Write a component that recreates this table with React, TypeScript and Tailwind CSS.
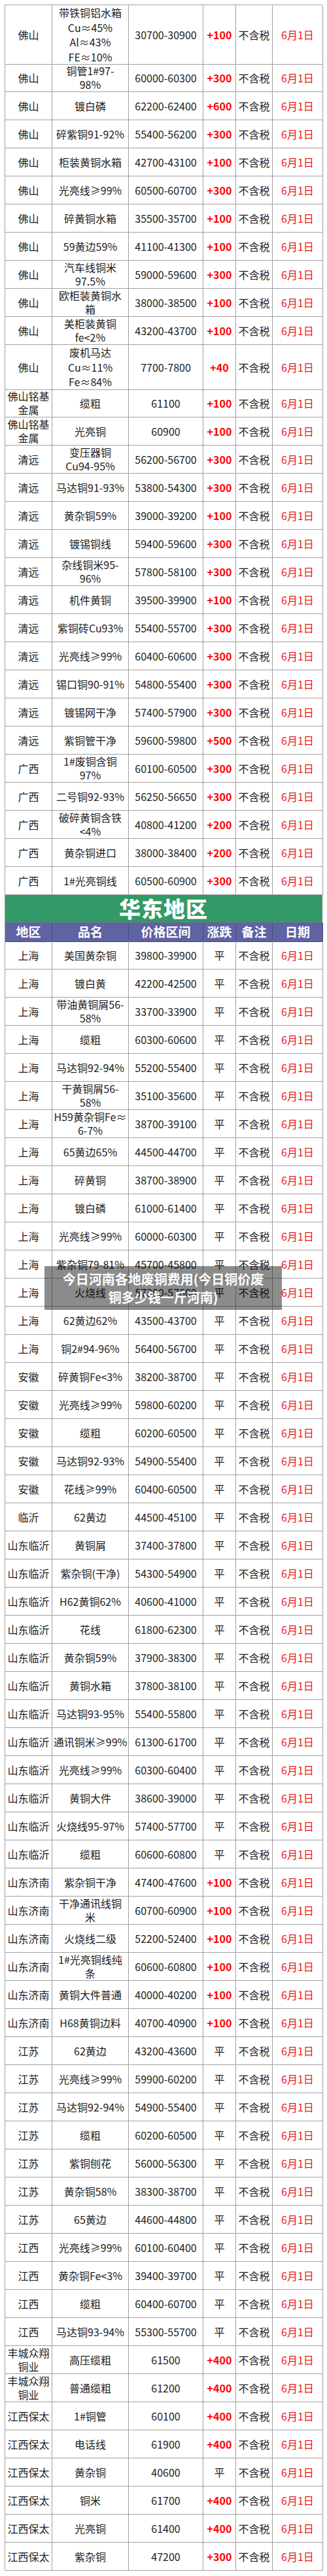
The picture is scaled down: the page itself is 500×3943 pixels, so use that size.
type Row = [string, string, string, string];

const south: Row[] = [
  ["佛山", "带铁铜铝水箱\nCu≈45%\nAl≈43%\nFE≈10%", "30700-30900", "+100"],
  ["佛山", "铜管1#97-\n98%", "60000-60300", "+300"],
  ["佛山", "镀白磷", "62200-62400", "+600"],
  ["佛山", "碎紫铜91-92%", "55400-56200", "+300"],
  ["佛山", "柜装黄铜水箱", "42700-43100", "+100"],
  ["佛山", "光亮线≥99%", "60500-60700", "+300"],
  ["佛山", "碎黄铜水箱", "35500-35700", "+100"],
  ["佛山", "59黄边59%", "41100-41300", "+100"],
  ["佛山", "汽车线铜米\n97.5%", "59000-59600", "+300"],
  ["佛山", "欧柜装黄铜水\n箱", "38000-38500", "+100"],
  ["佛山", "美柜装黄铜\nfe<2%", "43200-43700", "+100"],
  ["佛山", "废机马达\nCu≈11%\nFe≈84%", "7700-7800", "+40"],
  ["佛山铭基\n金属", "缆粗", "61100", "+100"],
  ["佛山铭基\n金属", "光亮铜", "60900", "+100"],
  ["清远", "变压器铜\nCu94-95%", "56200-56700", "+300"],
  ["清远", "马达铜91-93%", "53800-54300", "+300"],
  ["清远", "黄杂铜59%", "39000-39200", "+100"],
  ["清远", "镀锡铜线", "59400-59600", "+300"],
  ["清远", "杂线铜米95-\n96%", "57800-58100", "+300"],
  ["清远", "机件黄铜", "39500-39900", "+100"],
  ["清远", "紫铜砖Cu93%", "55400-55700", "+300"],
  ["清远", "光亮线≥99%", "60400-60600", "+300"],
  ["清远", "锡口铜90-91%", "54800-55400", "+300"],
  ["清远", "镀锡网干净", "57400-57900", "+300"],
  ["清远", "紫铜管干净", "59600-59800", "+500"],
  ["广西", "1#废铜含铜\n97%", "60100-60500", "+300"],
  ["广西", "二号铜92-93%", "56250-56650", "+300"],
  ["广西", "破碎黄铜含铁\n<4%", "40800-41200", "+200"],
  ["广西", "黄杂铜进口", "38000-38400", "+200"],
  ["广西", "1#光亮铜线", "60500-60900", "+300"],
];

const east: Row[] = [
  ["上海", "美国黄杂铜", "39800-39900", "平"],
  ["上海", "镀白黄", "42200-42500", "平"],
  ["上海", "带油黄铜屑56-\n58%", "33700-33900", "平"],
  ["上海", "缆粗", "60300-60600", "平"],
  ["上海", "马达铜92-94%", "55200-55400", "平"],
  ["上海", "干黄铜屑56-\n58%", "35100-35600", "平"],
  ["上海", "H59黄杂铜Fe≈\n6-7%", "38700-39100", "平"],
  ["上海", "65黄边65%", "44500-44700", "平"],
  ["上海", "碎黄铜", "38700-38900", "平"],
  ["上海", "镀白磷", "61000-61400", "平"],
  ["上海", "光亮线≥99%", "60000-60300", "平"],
  ["上海", "紫杂铜79-81%", "45700-45800", "平"],
  ["上海", "火烧线", "57300-57600", "平"],
  ["上海", "62黄边62%", "43500-43700", "平"],
  ["上海", "铜2#94-96%", "56400-56700", "平"],
  ["安徽", "碎黄铜Fe<3%", "38200-38700", "平"],
  ["安徽", "光亮线≥99%", "59800-60200", "平"],
  ["安徽", "缆粗", "60200-60500", "平"],
  ["安徽", "马达铜92-93%", "54900-55400", "平"],
  ["安徽", "花线≥99%", "60400-60500", "平"],
  ["临沂", "62黄边", "44500-45100", "平"],
  ["山东临沂", "黄铜屑", "37400-37800", "平"],
  ["山东临沂", "紫杂铜(干净)", "54300-54900", "平"],
  ["山东临沂", "H62黄铜62%", "40600-41000", "平"],
  ["山东临沂", "花线", "61800-62300", "平"],
  ["山东临沂", "黄杂铜59%", "37900-38300", "平"],
  ["山东临沂", "黄铜水箱", "37800-38100", "平"],
  ["山东临沂", "马达铜93-95%", "55400-55800", "平"],
  ["山东临沂", "通讯铜米≥99%", "61300-61700", "平"],
  ["山东临沂", "光亮线≥99%", "60300-60400", "平"],
  ["山东临沂", "黄铜大件", "38600-39000", "平"],
  ["山东临沂", "火烧线95-97%", "57400-57700", "平"],
  ["山东临沂", "缆粗", "60600-60800", "平"],
  ["山东济南", "紫杂铜干净", "47400-47600", "+100"],
  ["山东济南", "干净通讯线铜\n米", "60700-60900", "+100"],
  ["山东济南", "火烧线二级", "52200-52400", "+100"],
  ["山东济南", "1#光亮铜线纯\n条", "60600-60800", "+100"],
  ["山东济南", "黄铜大件普通", "40000-40200", "+100"],
  ["山东济南", "H68黄铜边料", "40700-40900", "+100"],
  ["江苏", "62黄边", "43200-43600", "平"],
  ["江苏", "光亮线≥99%", "59900-60200", "平"],
  ["江苏", "马达铜92-94%", "54900-55400", "平"],
  ["江苏", "缆粗", "60200-60500", "平"],
  ["江苏", "紫铜刨花", "56000-56300", "平"],
  ["江苏", "黄杂铜58%", "38300-38700", "平"],
  ["江苏", "65黄边", "44600-44800", "平"],
  ["江西", "光亮线≥99%", "60100-60400", "平"],
  ["江西", "黄杂铜Fe<3%", "39400-39700", "平"],
  ["江西", "缆粗", "60400-60700", "平"],
  ["江西", "马达铜93-94%", "55300-55700", "平"],
  ["丰城众翔\n铜业", "高压缆粗", "61500", "+400"],
  ["丰城众翔\n铜业", "普通缆粗", "61200", "+400"],
  ["江西保太", "1#铜管", "60100", "+400"],
  ["江西保太", "电话线", "61900", "+400"],
  ["江西保太", "黄杂铜", "40600", "平"],
  ["江西保太", "铜米", "61700", "+400"],
  ["江西保太", "光亮铜", "61400", "+400"],
  ["江西保太", "紫杂铜", "47200", "+300"],
];

const cols = "grid grid-cols-[72px_117px_114px_50px_56px_77px]";
const cell = "flex items-center justify-center border-r border-b border-[#a0a0a0] text-center whitespace-pre";

function PriceRow({ row }: { row: Row }) {
  const [region, name, price, change] = row;
  const lines = Math.max(name.split("\n").length, region.split("\n").length);
  const h = lines >= 4 ? "h-[90px] leading-[22.5px]" : lines === 3 ? "h-[68px] leading-[22.5px]" : "h-[43px] leading-[21px]";
  const up = change !== "平";
  return (
    <div className={`${cols} ${h}`}>
      <div className={cell}>{region}</div>
      <div className={cell}>{name}</div>
      <div className={cell}>{price}</div>
      <div className={`${cell} ${up ? "font-bold text-[#ff0000]" : ""}`}>{change}</div>
      <div className={cell}>不含税</div>
      <div className={`${cell} text-[#e8191f]`}>6月1日</div>
    </div>
  );
}

function EastHeader() {
  const heads = ["地区", "品名", "价格区间", "涨跌", "备注", "日期"];
  return (
    <>
      <div className="flex h-[42px] items-center justify-center border-r border-b border-[#5a8a6e] bg-[#339966] text-[33px] font-black tracking-[1px] text-white">
        华东地区
      </div>
      <div className={`${cols} h-[29px] bg-[#5f62a3]`}>
        {heads.map((t) => (
          <div key={t} className="flex items-center justify-center border-r border-b border-[#4a4c80] text-[19px] font-bold text-white">
            {t}
          </div>
        ))}
      </div>
    </>
  );
}

export default function App() {
  return (
    <div className="relative min-h-[3943px] bg-white px-[7px] pt-[7px] font-['Noto_Sans_CJK_SC','Noto_Sans',sans-serif] text-[16px] text-[#1c1c1c]">
      <div className="w-[486px] border-l border-t border-[#a0a0a0]">
        {south.map((r, i) => (
          <PriceRow key={"s" + i} row={r} />
        ))}
        <EastHeader />
        {east.map((r, i) => (
          <PriceRow key={"e" + i} row={r} />
        ))}
      </div>
      <div className="absolute left-[68px] top-[1938px] flex h-[67px] w-[363px] flex-col items-center justify-center bg-[rgba(0,0,0,0.45)] text-center text-[20px] font-bold leading-[28px] text-white">
        <span>今日河南各地废铜费用(今日铜价废</span>
        <span>铜多少钱一斤河南)</span>
      </div>
    </div>
  );
}
